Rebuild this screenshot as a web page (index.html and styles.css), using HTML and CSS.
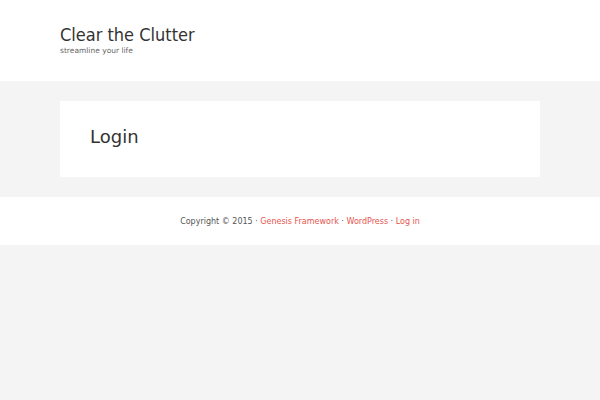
FILE: index.html
```html
<!DOCTYPE html>
<html>
<head>
<meta charset="utf-8">
<link rel="stylesheet" href="styles.css">
</head>
<body>
<header class="site-header">
  <div class="wrap">
    <p class="site-title">Clear the Clutter</p>
    <p class="site-description">streamline your life</p>
  </div>
</header>
<div class="site-inner">
  <main class="content">
    <h1 class="entry-title">Login</h1>
  </main>
</div>
<footer class="site-footer">
  <p>Copyright © 2015 · <a href="#">Genesis Framework</a> · <a href="#">WordPress</a> · <a href="#">Log in</a></p>
</footer>
</body>
</html>
```
FILE: styles.css
```css
html, body {
  margin: 0;
  padding: 0;
}
body {
  background: #f4f4f4;
  font-family: "DejaVu Sans", sans-serif;
  color: #333;
}
.site-header {
  background: #fff;
  height: 81px;
  box-sizing: border-box;
  padding: 25px 60px 0;
}
.site-title {
  margin: 0;
  font-family: "DejaVu Sans Condensed", "DejaVu Sans", sans-serif;
  font-stretch: condensed;
  font-size: 18px;
  line-height: 20px;
  color: #333;
}
.site-description {
  margin: 1px 0 0;
  font-size: 7.5px;
  line-height: 10px;
  color: #666;
}
.site-inner {
  padding: 20px 60px;
}
.content {
  background: #fff;
  height: 76px;
  box-sizing: border-box;
  padding: 26px 30px 0;
}
.entry-title {
  margin: 0;
  font-size: 18px;
  font-weight: normal;
  line-height: 20px;
  color: #333;
}
.site-footer {
  background: #fff;
  height: 48px;
  box-sizing: border-box;
  padding-top: 19px;
  text-align: center;
}
.site-footer p {
  margin: 0;
  font-size: 8px;
  line-height: 12px;
  color: #555;
}
.site-footer a {
  color: #e5554e;
  text-decoration: none;
}
```
